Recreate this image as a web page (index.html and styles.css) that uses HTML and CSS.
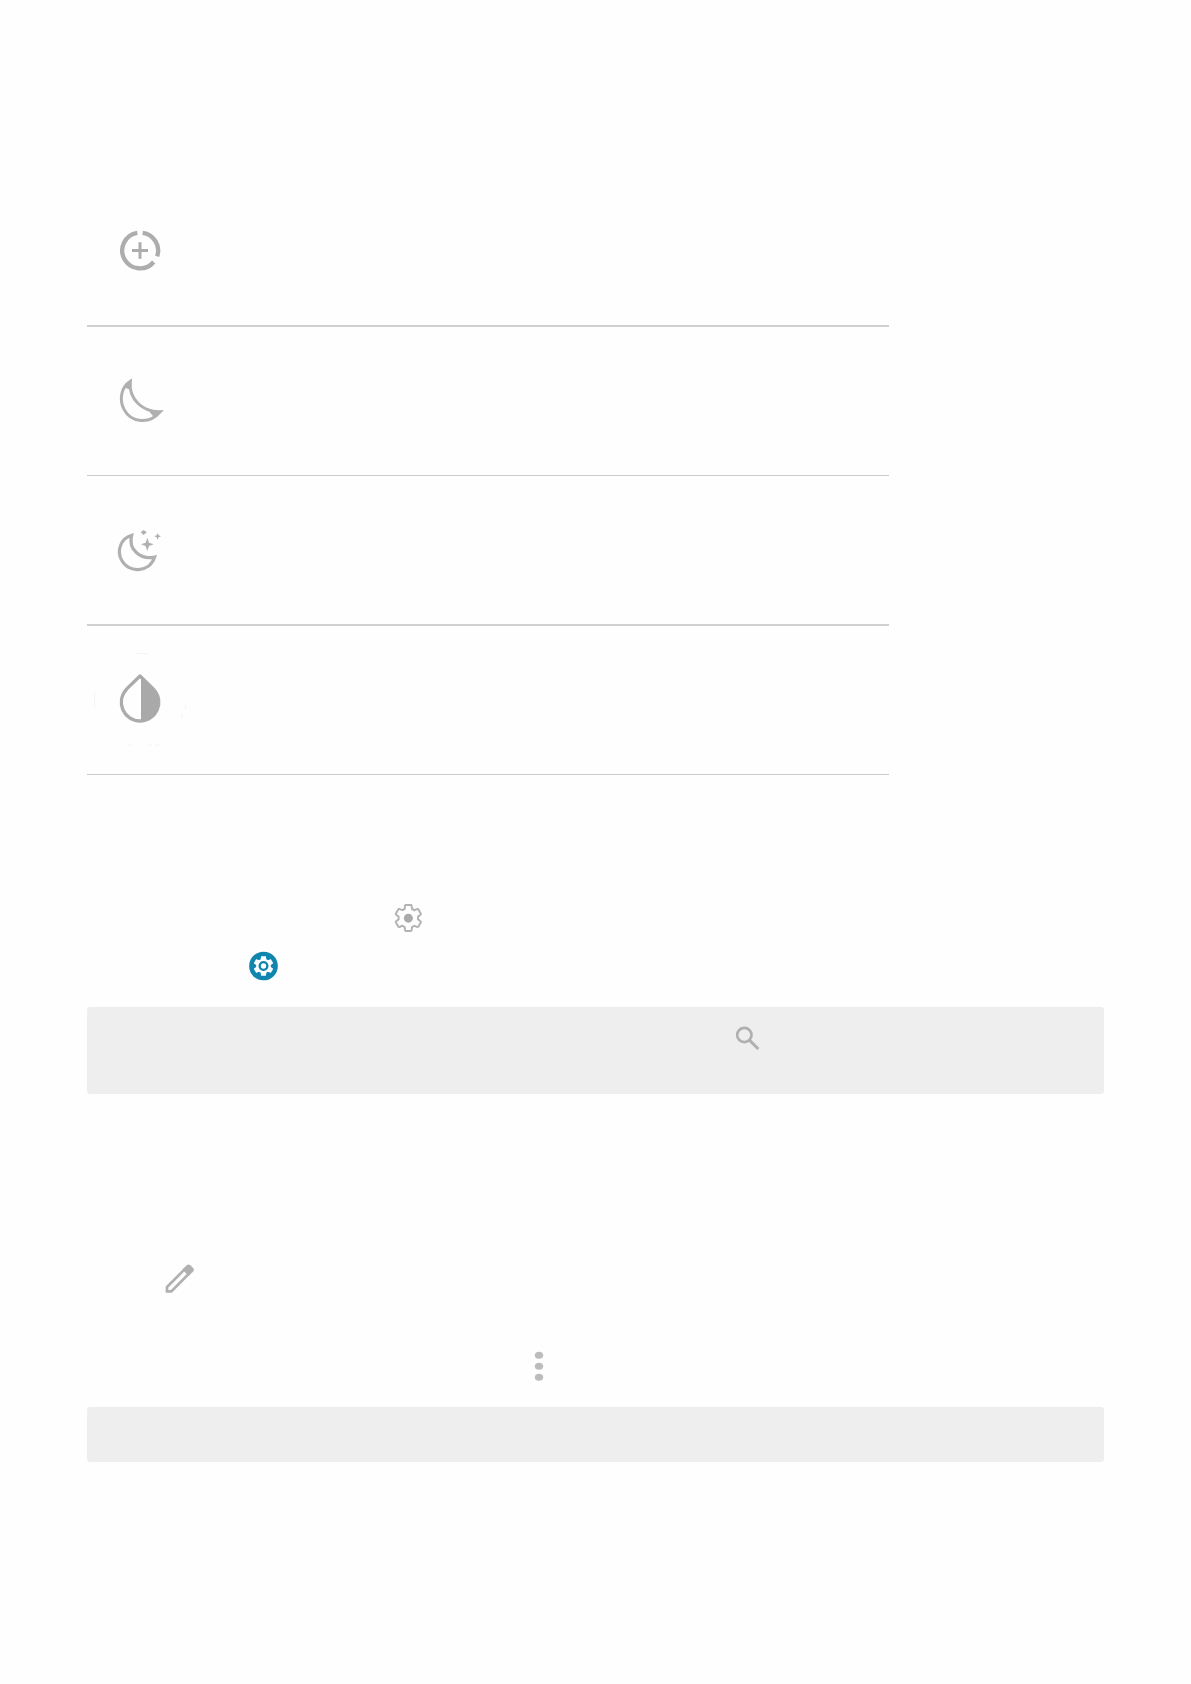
FILE: index.html
```
<!DOCTYPE html>
<html lang="en">
<head>
<meta charset="utf-8">
<title>Quick settings</title>
<link rel="stylesheet" href="styles.css">
</head>
<body>
<svg class="defs" aria-hidden="true"><defs>
<path id="gear" d="M19.43 12.98c.04-.32.07-.64.07-.98s-.03-.66-.07-.98l2.11-1.65c.19-.15.24-.42.12-.64l-2-3.46c-.09-.16-.26-.25-.44-.25-.06 0-.12.01-.17.03l-2.49 1c-.52-.4-1.08-.73-1.69-.98l-.38-2.65C14.46 2.18 14.25 2 14 2h-4c-.25 0-.46.18-.49.42l-.38 2.65c-.61.25-1.17.59-1.69.98l-2.49-1c-.06-.02-.12-.03-.18-.03-.17 0-.34.09-.43.25l-2 3.46c-.13.22-.07.49.12.64l2.11 1.65c-.04.32-.07.65-.07.98s.03.66.07.98l-2.11 1.65c-.19.15-.24.42-.12.64l2 3.46c.09.16.26.25.44.25.06 0 .12-.01.17-.03l2.49-1c.52.4 1.08.73 1.69.98l.38 2.65c.03.24.24.42.49.42h4c.25 0 .46-.18.49-.42l.38-2.65c.61-.25 1.17-.59 1.69-.98l2.49 1c.06.02.12.03.18.03.17 0 .34-.09.43-.25l2-3.46c.12-.22.07-.49-.12-.64z"/>
</defs></svg>
<main class="page">
  <section class="icon-table">
    <div class="row row-data">
      <svg class="icon" viewBox="90 30 180 180" fill="none" stroke="#adadad" stroke-width="13">
        <path d="M172 68.600A53.500 53.500 0 1 0 221 156M188 68.600A53.500 53.500 0 0 1 231.500 139"/>
        <path d="M180 97v49M156 121.500h48" stroke-width="9"/>
      </svg>
    </div>
    <div class="row row-moon">
      <svg class="icon" viewBox="90 30 180 180" fill="none" stroke="#b0b0b0" stroke-width="9">
        <path d="M151 64C123 82 117 119 132 148C153 188 208 195 241 155C191 157 145 120 151 64Z"/>
        <path d="M154 56L132 82L150 89ZM250 152L207 154L222 172Z" fill="#b0b0b0" stroke="none"/>
      </svg>
    </div>
    <div class="row row-bedtime">
      <svg class="icon" viewBox="90 30 180 180" fill="none" stroke="#b0b0b0" stroke-width="9.500">
        <path d="M155 76C122 86 110 121 124 149C144 190 208 190 224 141C182 150 144 120 155 76Z"/>
        <path d="M202 83L207 98L221 103L207 108L202 123L197 108L183 103L197 98ZM233 69L236 76L243 79L236 82L233 89L230 82L223 79L230 76ZM191 60L200 67L191 75L182 67Z" fill="#b0b0b0" stroke="none"/>
      </svg>
    </div>
    <div class="row row-invert">
      <svg class="icon-wide" viewBox="30 30 300 330" fill="none">
        <path d="M180 108L141 146C103 187 134 243 180 243C226 243 258 187 219 146Z" stroke="#ababab" stroke-width="10" stroke-linejoin="round"/>
        <path d="M183 108L219 146C258 187 226 243 183 243Z" fill="#a9a9a9"/>
        <path d="M165 41h38M44 156v49M305 237l3-13M317 195v12M145 315h11M205 315h11M226 315h11" stroke="#f1f1f1" stroke-width="2.500"/>
      </svg>
    </div>
  </section>
  <div class="line line-gear">
    <svg viewBox="15 15 150 135">
      <use href="#gear" transform="translate(38.200 37.200) scale(3.900)" fill="none" stroke="#b3b3b3" stroke-width="1.500"/>
      <circle cx="85" cy="84.500" r="13.500" fill="#aaa"/>
    </svg>
  </div>
  <div class="line line-app">
    <svg viewBox="15 0 150 150">
      <circle cx="85.500" cy="78" r="43" fill="#1085ae"/>
      <use href="#gear" transform="translate(50.100 42.600) scale(2.950)" fill="#fff"/>
      <circle cx="85.500" cy="78" r="11.500" fill="#fff" stroke="#1085ae" stroke-width="7"/>
    </svg>
  </div>
  <aside class="note note-search">
    <svg viewBox="0 30 150 150" fill="none" stroke="#b0b0b0">
      <circle cx="73" cy="105" r="21.500" stroke-width="8"/>
      <path d="M89 121L115 147" stroke-width="9"/>
    </svg>
  </aside>
  <div class="line line-edit">
    <svg viewBox="0 0 180 180">
      <path d="M51 111L103 59L116 72L64 124L51 124Z" fill="none" stroke="#b0b0b0" stroke-width="8"/>
      <path d="M98 58L111 45Q116 41 121 46L130 55Q134 60 129 65L116 77Z" fill="#b0b0b0"/>
    </svg>
  </div>
  <div class="line line-more">
    <svg viewBox="0 0 180 180" fill="#bcbcbc">
      <ellipse cx="87" cy="61" rx="12.500" ry="10.500"/>
      <ellipse cx="87" cy="94" rx="12.500" ry="10.500"/>
      <ellipse cx="87" cy="127" rx="12.500" ry="10.500"/>
    </svg>
  </div>
  <aside class="note note-short"></aside>
</main>
</body>
</html>
```
FILE: styles.css
```
* { box-sizing: border-box; }
body { margin: 0; background: #fefefe; font-family: "Liberation Sans", sans-serif; }
svg { display: block; }
.defs { display: none; }
.page { display: flow-root; height: 1684px; padding: 176px 87px 0; overflow: hidden; }
.icon-table { width: 802px; }
.row { padding-left: 23px; border-bottom: 1px solid #cacaca; }
.row-data { height: 151px; padding-top: 44px; border-bottom: 2px solid #d0d0d0; }
.row-moon { height: 149px; padding-top: 43px; }
.row-bedtime { height: 150px; padding-top: 44px; border-bottom: 2px solid #d0d0d0; }
.row-invert { height: 149px; padding: 24px 0 0 3px; }
.icon { width: 60px; height: 60px; }
.icon-wide { width: 100px; height: 110px; }
.line-gear { margin-top: 120px; padding-left: 298px; }
.line-gear svg { width: 50px; height: 45px; }
.line-app { padding-left: 153px; }
.line-app svg { width: 50px; height: 50px; }
.note { background: #eee; border-radius: 4px; box-shadow: 0 0 1px #eee; }
.note-search { height: 87px; margin-top: 17px; padding: 3px 0 0 633px; }
.note-search svg { width: 50px; height: 50px; }
.line-edit { margin-top: 156px; padding-left: 63px; }
.line-edit svg, .line-more svg { width: 60px; height: 60px; }
.line-more { margin-top: 25px; padding-left: 423px; }
.note-short { height: 55px; margin-top: 12px; }
```
